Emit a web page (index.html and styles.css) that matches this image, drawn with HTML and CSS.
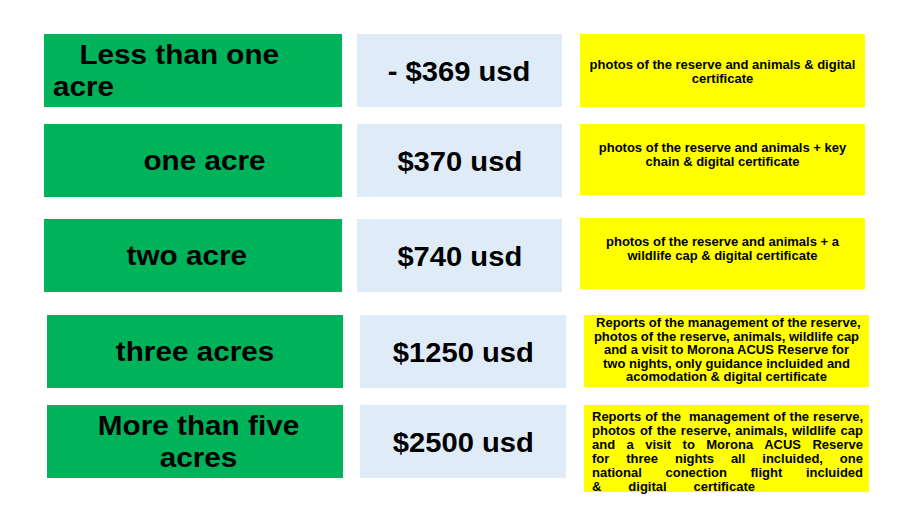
FILE: index.html
```html
<!DOCTYPE html>
<html lang="en">
<head>
<meta charset="utf-8">
<title>Acre adoption prices</title>
<link rel="stylesheet" href="styles.css">
</head>
<body>
<main class="sheet">
  <section class="row row-a row-1">
    <div class="cell area area-1"><span class="label label-left">Less than one<br>acre</span></div>
    <div class="cell price"><span class="amount">- $369 usd</span></div>
    <div class="cell reward reward-mid">photos of the reserve and animals &amp; digital<br>certificate</div>
  </section>
  <section class="row row-a row-2">
    <div class="cell area area-2"><span class="label">one acre</span></div>
    <div class="cell price"><span class="amount">$370 usd</span></div>
    <div class="cell reward reward-up">photos of the reserve and animals + key<br>chain &amp; digital certificate</div>
  </section>
  <section class="row row-a row-3">
    <div class="cell area area-3"><span class="label">two acre</span></div>
    <div class="cell price"><span class="amount">$740 usd</span></div>
    <div class="cell reward reward-up reward-raised">photos of the reserve and animals + a<br>wildlife cap &amp; digital certificate</div>
  </section>
  <section class="row row-b row-4">
    <div class="cell area"><span class="label">three acres</span></div>
    <div class="cell price"><span class="amount">$1250 usd</span></div>
    <div class="cell reward reward-dense">&nbsp;Reports of the management of the reserve,<br>photos of the reserve, animals, wildlife cap<br>and a visit to Morona ACUS Reserve for<br>two nights, only guidance incluided and<br>acomodation &amp; digital certificate</div>
  </section>
  <section class="row row-b row-5">
    <div class="cell area area-5"><span class="label">More than five<br>acres</span></div>
    <div class="cell price"><span class="amount">$2500 usd</span></div>
    <div class="cell reward reward-justified">
      <span class="jline">Reports of the&nbsp; management of the reserve,</span>
      <span class="jline">photos of the reserve, animals, wildlife cap</span>
      <span class="jline">and a visit to Morona ACUS Reserve</span>
      <span class="jline">for three nights all incluided, one</span>
      <span class="jline">national conection flight incluided</span>
      <span class="jline jline-last">&amp; digital certificate</span>
    </div>
  </section>
</main>
</body>
</html>
```
FILE: styles.css
```css
html, body {
  margin: 0;
  padding: 0;
  background: #ffffff;
}

body {
  font-family: "Liberation Sans", Arial, sans-serif;
  color: #000000;
  width: 900px;
  height: 506px;
  overflow: hidden;
}

.sheet {
  display: flex;
  flex-direction: column;
  padding-top: 34px;
}

.row {
  display: flex;
  align-items: flex-start;
}

.row-a {
  padding-left: 44px;
}

.row-b {
  padding-left: 47px;
}

.row-2 { margin-top: 17px; }
.row-3 { margin-top: 22px; }
.row-4 { margin-top: 23px; }
.row-5 { margin-top: 17px; }

.cell {
  box-sizing: border-box;
  height: 73px;
  font-weight: bold;
}

/* green area column */
.area {
  background: #00b35a;
  width: 298px;
  display: flex;
  align-items: center;
  justify-content: center;
  text-align: center;
  font-size: 27px;
  line-height: 32px;
}

.row-b .area {
  width: 296px;
}

.label {
  display: inline-block;
  transform: scaleX(1.1);
  transform-origin: center;
}

.area-1 {
  justify-content: flex-start;
  text-align: left;
  padding-left: 9px;
}

.label-left {
  text-indent: 24px;
  transform-origin: left center;
}

.area-2 {
  padding-left: 24px;
}

.area-3 {
  padding-right: 12px;
}

.area-5 {
  padding-left: 8px;
}

/* blue price column */
.price {
  background: #dfebf7;
  width: 205px;
  margin-left: 15px;
  display: flex;
  align-items: center;
  justify-content: center;
  font-size: 27px;
  line-height: 32px;
  padding-top: 2px;
}

.amount {
  display: inline-block;
  transform: scaleX(1.08);
}

.row-b .price {
  width: 206px;
  margin-left: 17px;
}

/* yellow reward column */
.reward {
  background: #ffff00;
  width: 285px;
  margin-left: 18px;
  font-size: 13px;
  line-height: 14px;
  text-align: center;
}

.reward-mid {
  display: flex;
  align-items: center;
  justify-content: center;
  padding-top: 2px;
}

.reward-up {
  height: 71px;
  padding-top: 17px;
}

.reward-raised {
  margin-top: -1px;
}

.reward-dense {
  height: 72px;
  line-height: 13.5px;
  padding-top: 1px;
}

.reward-justified {
  height: 87px;
  padding: 5px 6px 0 8px;
  text-align: justify;
  line-height: 14px;
}

.jline {
  display: block;
  text-align: justify;
  text-align-last: justify;
}

.jline-last {
  width: 163px;
}
```
